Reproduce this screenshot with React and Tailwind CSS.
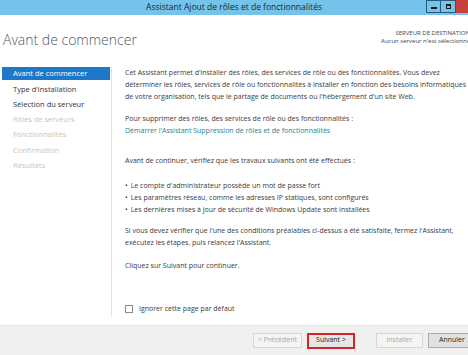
import React from "react";

const steps = [
  { label: "Avant de commencer", state: "active" },
  { label: "Type d'installation", state: "normal" },
  { label: "Sélection du serveur", state: "normal" },
  { label: "Rôles de serveurs", state: "disabled" },
  { label: "Fonctionnalités", state: "disabled" },
  { label: "Confirmation", state: "disabled" },
  { label: "Résultats", state: "disabled" },
];

const bullets = [
  "Le compte d'administrateur possède un mot de passe fort",
  "Les paramètres réseau, comme les adresses IP statiques, sont configurés",
  "Les dernières mises à jour de sécurité de Windows Update sont installées",
];

const App = () => {
  return (
    <div
      className="w-[468px] h-[355px] overflow-hidden bg-white flex flex-col text-[#333]"
      style={{ fontFamily: '"Open Sans", "Noto Sans", sans-serif' }}
    >
      {/* Title bar */}
      <div className="h-[15px] shrink-0 bg-[#73c3ea] flex items-center relative">
        <div className="flex-1 text-center text-[8.5px] text-[#1c2a33] leading-none">
          Assistant Ajout de rôles et de fonctionnalités
        </div>
        <div className="absolute right-0 top-0 flex h-[13px]">
          <div className="w-[15px] h-[13px] border border-[#2a5a78] bg-[#73c3ea] flex items-center justify-center">
            <div className="w-[6px] h-[2px] bg-[#1a1a1a] mt-[3px]" />
          </div>
          <div className="w-[15px] h-[13px] border border-l-0 border-[#2a5a78] bg-[#73c3ea] flex items-center justify-center">
            <div className="w-[5px] h-[5px] border-[1.5px] border-t-[2px] border-[#1a1a1a]" />
          </div>
          <div className="w-[12px] h-[13px] bg-[#c7423a]" />
        </div>
      </div>

      {/* Header */}
      <div className="h-[52px] shrink-0 flex items-start justify-between pl-[3px]">
        <h1 className="mt-[18px] text-[14px] font-light text-[#4a5866] leading-none">
          Avant de commencer
        </h1>
        <div className="mt-[14px] text-right text-[6px] leading-[8px] text-[#444] whitespace-nowrap -mr-[2px]">
          <div>SERVEUR DE DESTINATION</div>
          <div>Aucun serveur n'est sélectionné</div>
        </div>
      </div>

      {/* Body */}
      <div className="flex-1 flex min-h-0">
        <nav className="w-[112px] shrink-0 pl-[2px] border-r border-[#e3e3e3] mb-[8px]">
          {steps.map((s) => (
            <div
              key={s.label}
              className={
                "flex items-center pl-[11px] text-[7.5px] whitespace-nowrap " +
                (s.state === "active"
                  ? "h-[13px] bg-[#1e78c8] text-white mr-[1px] mb-[1.5px]"
                  : s.state === "normal"
                  ? "h-[15.3px] text-[#333]"
                  : "h-[15.3px] text-[#c4c4c4]")
              }
            >
              {s.label}
            </div>
          ))}
        </nav>

        <div className="flex-1 flex flex-col pl-[13px] text-[7px] leading-[12px] text-[#3a3a3a]">
          <p className="whitespace-nowrap">
            Cet Assistant permet d'installer des rôles, des services de rôle ou des fonctionnalités. Vous devez
            <br />
            déterminer les rôles, services de rôle ou fonctionnalités à installer en fonction des besoins informatiques
            <br />
            de votre organisation, tels que le partage de documents ou l'hébergement d'un site Web.
          </p>
          <p className="mt-[10px]">
            Pour supprimer des rôles, des services de rôle ou des fonctionnalités :
            <br />
            <span className="text-[#1f7f93]">
              Démarrer l'Assistant Suppression de rôles et de fonctionnalités
            </span>
          </p>
          <p className="mt-[18px]">
            Avant de continuer, vérifiez que les travaux suivants ont été effectués :
          </p>
          <ul className="mt-[13px]">
            {bullets.map((b) => (
              <li key={b} className="flex items-start gap-[3px] leading-[12px]">
                <span className="text-[7px]">•</span>
                <span>{b}</span>
              </li>
            ))}
          </ul>
          <p className="mt-[9px] whitespace-nowrap">
            Si vous devez vérifier que l'une des conditions préalables ci-dessus a été satisfaite, fermez l'Assistant,
            <br />
            exécutez les étapes, puis relancez l'Assistant.
          </p>
          <p className="mt-[11px]">Cliquez sur Suivant pour continuer.</p>

          <div className="mt-auto mb-[10px] flex items-center gap-[6px]">
            <div className="w-[8px] h-[8px] border border-[#8a8a8a] bg-white" />
            <span>Ignorer cette page par défaut</span>
          </div>
        </div>
      </div>

      {/* Footer */}
      <div className="h-[30px] shrink-0 bg-[#f0f0f0] border-t border-[#e6e6e6] flex items-center justify-end">
        <div className="flex items-center text-[7px]">
          <div className="w-[49px] h-[15px] border border-[#d6d6d6] bg-[#f4f4f4] text-[#a8a8a8] flex items-center justify-center">
            &lt; Précédent
          </div>
          <div className="ml-[5px] w-[48px] h-[16px] border-[2px] border-[#d2232a] bg-[#e6e6e6] text-[#222] flex items-center justify-center">
            Suivant &gt;
          </div>
          <div className="ml-[21px] w-[47px] h-[15px] border border-[#d6d6d6] bg-[#f4f4f4] text-[#a8a8a8] flex items-center justify-center">
            Installer
          </div>
          <div className="ml-[5px] w-[40px] h-[15px] border border-r-0 border-[#adadad] bg-[#e1e1e1] text-[#222] flex items-center pl-[10px] whitespace-nowrap">
            Annuler
          </div>
        </div>
      </div>
    </div>
  );
};

export default App;
